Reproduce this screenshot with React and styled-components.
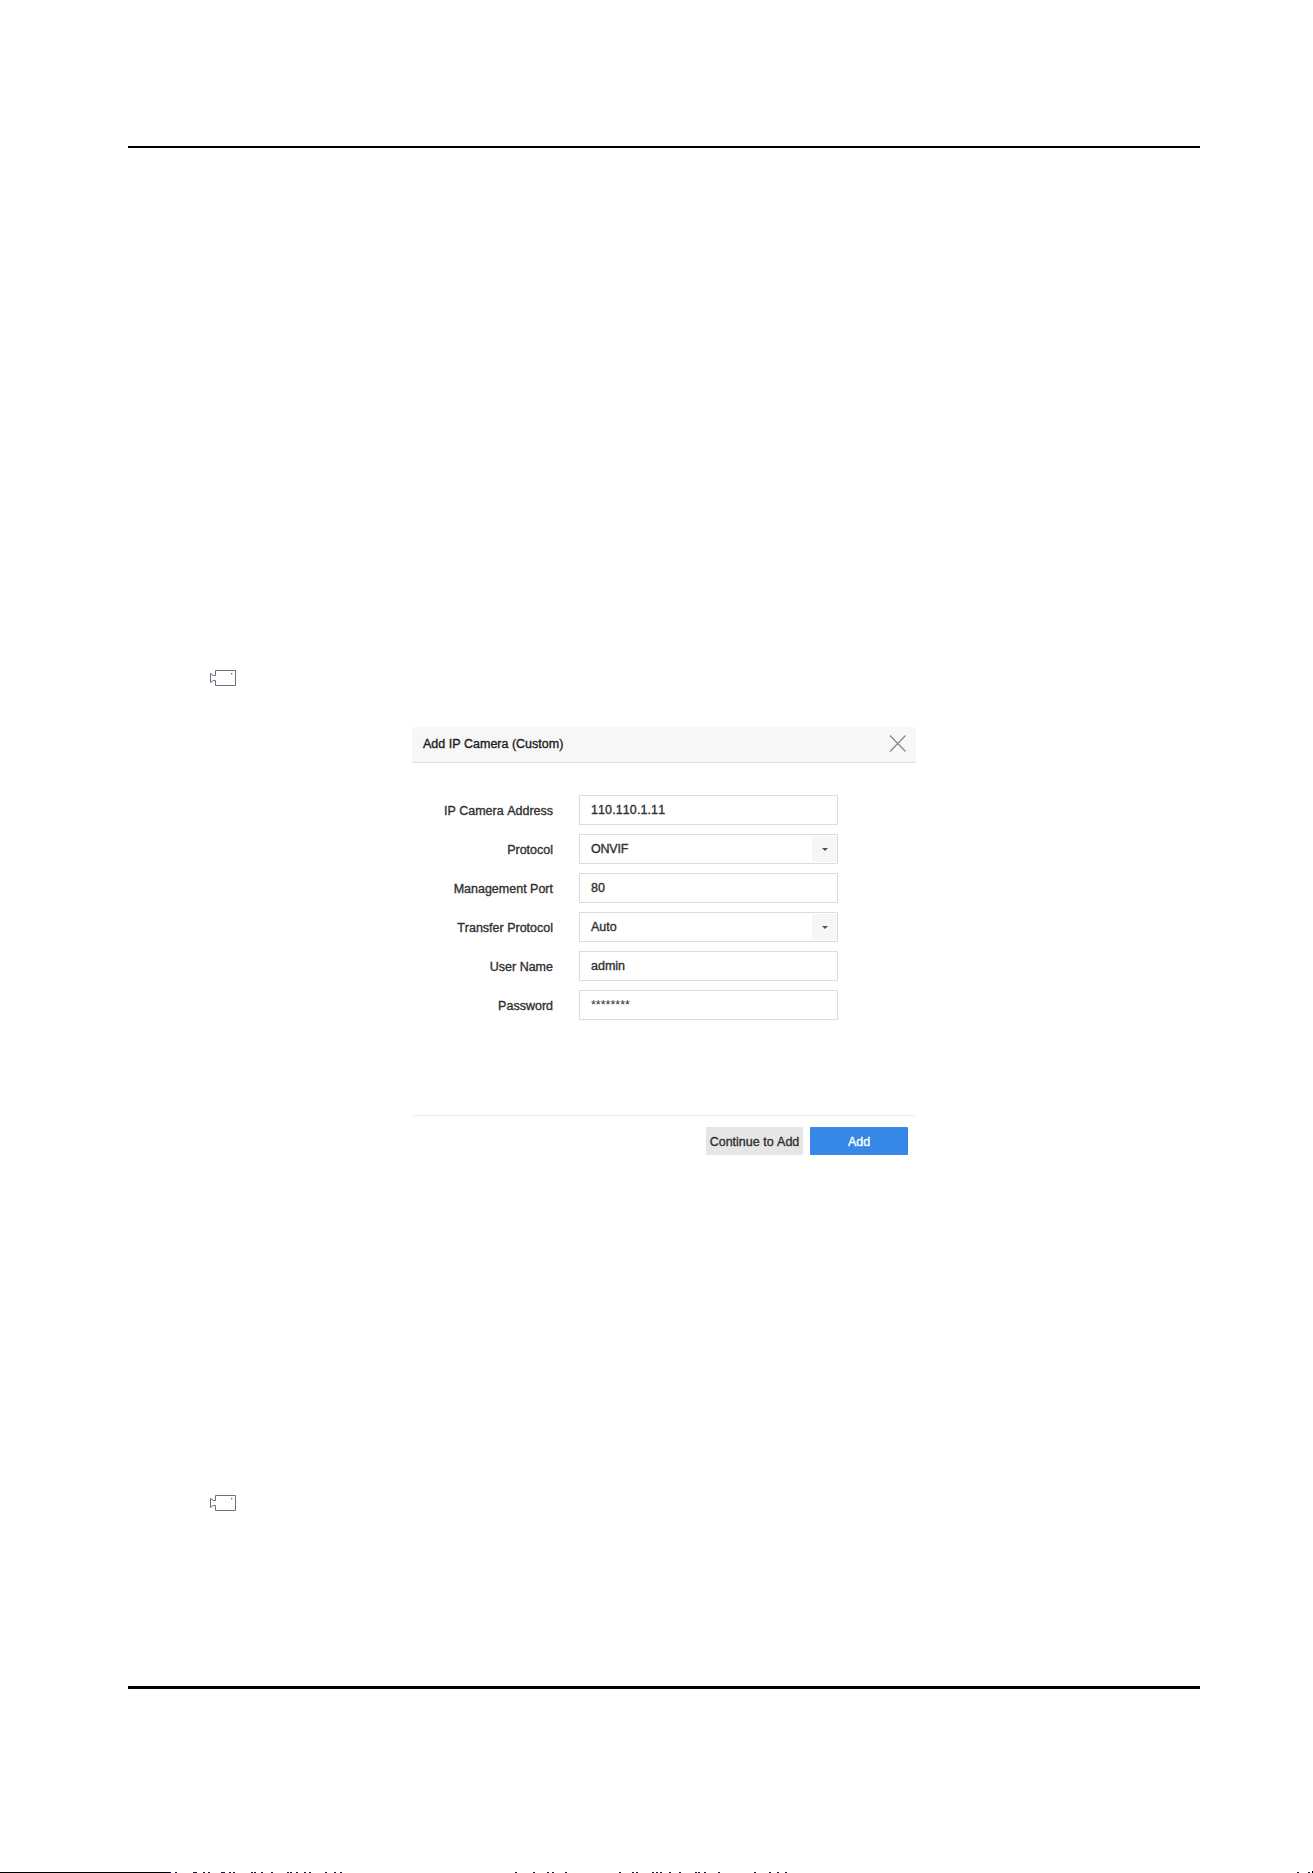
import styled, { createGlobalStyle } from "styled-components";

const GlobalStyle = createGlobalStyle`
    * {
        box-sizing: border-box;
    }

    body {
        margin: 0;
        background: #ffffff;
        font-family: "Liberation Sans", Arial, sans-serif;
        font-kerning: none;
    }
`;

const Page = styled.div`
    width: 1313px;
    height: 1873px;
    display: flex;
    flex-direction: column;
    padding-top: 146px;
    overflow: hidden;
`;

const Rule = styled.hr`
    width: 1072px;
    height: ${(props) => props.$size}px;
    flex-shrink: 0;
    margin: 0 0 0 128px;
    border: none;
    background: #000000;
`;

const Content = styled.main`
    height: 1538px;
    flex-shrink: 0;
    display: flex;
    flex-direction: column;
    padding-top: 522px;
`;

const Step = styled.div`
    height: 16px;
    display: flex;
    padding-left: 210px;

    svg {
        display: block;
    }
`;

const Dialog = styled.section`
    width: 504px;
    height: 437px;
    display: flex;
    flex-direction: column;
    margin: 41px 0 331px 412px;
    font-size: 12.5px;
    color: #303030;
    -webkit-text-stroke: 0.35px currentColor;
`;

const DialogHeader = styled.header`
    height: 36px;
    display: flex;
    justify-content: space-between;
    align-items: center;
    padding: 0 9px 2px 11px;
    border-bottom: 1px solid #e0e0e0;
    background: #f7f7f7;
    color: #1c1c1c;

    & > span {
        padding-top: 1px;
    }
`;

const CloseBtn = styled.button`
    width: 18px;
    height: 18px;
    padding: 0;
    border: none;
    background: none;

    svg {
        display: block;
    }
`;

const Form = styled.form`
    height: 352px;
    display: flex;
    flex-direction: column;
    gap: 9px;
    padding-top: 32px;
`;

const Row = styled.div`
    height: 30px;
    display: flex;
    align-items: center;
`;

const Label = styled.span`
    width: 141px;
    flex-shrink: 0;
    margin-right: 26px;
    padding-top: 1px;
    text-align: right;
    white-space: nowrap;
`;

const Field = styled.div`
    width: 259px;
    height: 30px;
    display: flex;
    justify-content: space-between;
    align-items: center;
    padding-left: 11px;
    border: 1px solid #dcdcdc;
`;

const Value = styled.span`
    letter-spacing: ${(props) => props.$spacing || 0}px;
    -webkit-text-stroke-width: ${(props) => (props.$masked ? 0 : 0.35)}px;
`;

const Arrow = styled.span`
    width: 25px;
    height: 26px;
    display: flex;
    justify-content: center;
    align-items: center;
    background: #f6f6f6;
`;

const DialogFooter = styled.footer`
    flex: 1;
    display: flex;
    justify-content: flex-end;
    gap: 7px;
    padding: 11px 8px 0 0;
    border-top: 1px solid #eeeeee;
`;

const Btn = styled.button`
    width: ${(props) => (props.$primary ? 98 : 97)}px;
    height: 28px;
    padding: 2px 0 0;
    border: none;
    border-radius: 1px;
    background: ${(props) => (props.$primary ? "#3687e8" : "#e6e6e6")};
    color: ${(props) => (props.$primary ? "#ffffff" : "#303030")};
    font: inherit;
    font-kerning: none;
    white-space: nowrap;
    -webkit-text-stroke: 0.35px currentColor;
`;

const Bottom = styled.div`
    height: 2px;
    margin-top: auto;

    svg {
        display: block;
    }
`;

const fields = [
    { label: "IP Camera Address", value: "110.110.1.11", spacing: 0.1 },
    { label: "Protocol", value: "ONVIF", select: true, spacing: -0.2 },
    { label: "Management Port", value: "80" },
    { label: "Transfer Protocol", value: "Auto", select: true },
    { label: "User Name", value: "admin" },
    { label: "Password", value: "********", masked: true },
];

const marks = [
    175, 193, 195, 203, 208, 221, 223, 229, 233, 251, 254, 261, 271, 287,
    290, 296, 304, 309, 325, 334, 340, 515, 533, 547, 552, 565, 619, 632,
    636, 652, 656, 660, 669, 679, 695, 698, 704, 718, 754, 769, 777, 785,
    1297, 1308,
];

function Camera() {
    return (
        <svg width="26" height="16" viewBox="0 0 26 16" fill="none">
            <path
                d="M5.5 5.5V.5H25.5V15.5H5.5V10.5H3.2L.5 12.5V3.5L3.2 5.5Z"
                stroke="#6e6c80"
                strokeLinejoin="round"
            />
            <rect x="21" y="3" width="1.3" height="1.3" fill="#5c5a70" />
        </svg>
    );
}

function App() {
    return (
        <Page>
            <GlobalStyle />
            <Rule $size={2} />

            <Content>
                <Step><Camera /></Step>

                <Dialog>
                    <DialogHeader>
                        <span>Add IP Camera (Custom)</span>
                        <CloseBtn type="button" aria-label="Close">
                            <svg width="18" height="18" fill="none" stroke="#858585" strokeWidth="1.2">
                                <path d="M1 .5 16.5 16.5M16.5 .5 1 16.5" />
                            </svg>
                        </CloseBtn>
                    </DialogHeader>

                    <Form>
                        {fields.map((field) => (
                            <Row key={field.label}>
                                <Label>{field.label}</Label>
                                <Field>
                                    <Value $spacing={field.spacing} $masked={field.masked}>
                                        {field.value}
                                    </Value>
                                    {field.select && (
                                        <Arrow>
                                            <svg width="6" height="3">
                                                <path d="M0 0H6L3 3Z" fill="#505050" />
                                            </svg>
                                        </Arrow>
                                    )}
                                </Field>
                            </Row>
                        ))}
                    </Form>

                    <DialogFooter>
                        <Btn type="button">Continue to Add</Btn>
                        <Btn type="button" $primary>Add</Btn>
                    </DialogFooter>
                </Dialog>

                <Step><Camera /></Step>
            </Content>

            <Rule $size={3} />

            <Bottom>
                <svg width="1313" height="2">
                    <rect y="1" width="170" height="1" />
                    <rect x="170" y="1" width="1" height="1" fill="#0000dd" />
                    {marks.map((x) => (
                        <rect key={x} x={x} y="1" width="2" height="1" fill="#1c1840" />
                    ))}
                    <rect x="1312" width="1" height="2" />
                </svg>
            </Bottom>
        </Page>
    );
}

export default App;
